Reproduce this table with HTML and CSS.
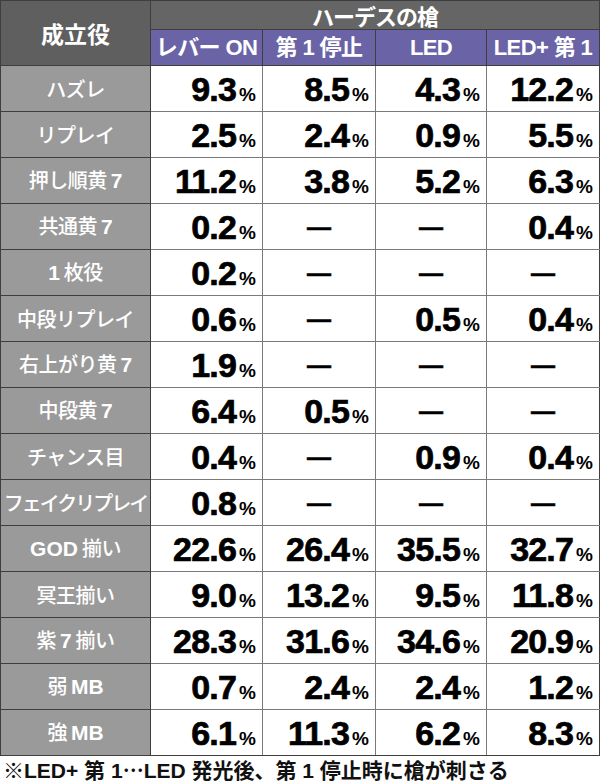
FILE: index.html
```html
<!DOCTYPE html>
<html lang="ja">
<head>
<meta charset="utf-8">
<link rel="stylesheet" href="styles.css">
</head>
<body>
<div class="page">
<table class="tbl">
<colgroup>
<col class="c-label"><col class="c1"><col class="c2"><col class="c3"><col class="c4">
</colgroup>
<thead>
<tr class="hr1"><th rowspan="2" class="corner">成立役</th><th colspan="4" class="group">ハーデスの槍</th></tr>
<tr class="hr2"><th class="sub">レバー ON</th><th class="sub">第 1 停止</th><th class="sub">LED</th><th class="sub">LED+ 第 1</th></tr>
</thead>
<tbody>
<tr><th class="label">ハズレ</th><td class="num">9.3<span class="pct">%</span></td><td class="num">8.5<span class="pct">%</span></td><td class="num">4.3<span class="pct">%</span></td><td class="num">12.2<span class="pct">%</span></td></tr>
<tr><th class="label">リプレイ</th><td class="num">2.5<span class="pct">%</span></td><td class="num">2.4<span class="pct">%</span></td><td class="num">0.9<span class="pct">%</span></td><td class="num">5.5<span class="pct">%</span></td></tr>
<tr><th class="label">押し順黄 <span class="lat">7</span></th><td class="num">11.2<span class="pct">%</span></td><td class="num">3.8<span class="pct">%</span></td><td class="num">5.2<span class="pct">%</span></td><td class="num">6.3<span class="pct">%</span></td></tr>
<tr><th class="label">共通黄 <span class="lat">7</span></th><td class="num">0.2<span class="pct">%</span></td><td class="dash">—</td><td class="dash">—</td><td class="num">0.4<span class="pct">%</span></td></tr>
<tr><th class="label"><span class="lat">1</span> 枚役</th><td class="num">0.2<span class="pct">%</span></td><td class="dash">—</td><td class="dash">—</td><td class="dash">—</td></tr>
<tr><th class="label">中段リプレイ</th><td class="num">0.6<span class="pct">%</span></td><td class="dash">—</td><td class="num">0.5<span class="pct">%</span></td><td class="num">0.4<span class="pct">%</span></td></tr>
<tr><th class="label">右上がり黄 <span class="lat">7</span></th><td class="num">1.9<span class="pct">%</span></td><td class="dash">—</td><td class="dash">—</td><td class="dash">—</td></tr>
<tr><th class="label">中段黄 <span class="lat">7</span></th><td class="num">6.4<span class="pct">%</span></td><td class="num">0.5<span class="pct">%</span></td><td class="dash">—</td><td class="dash">—</td></tr>
<tr><th class="label">チャンス目</th><td class="num">0.4<span class="pct">%</span></td><td class="dash">—</td><td class="num">0.9<span class="pct">%</span></td><td class="num">0.4<span class="pct">%</span></td></tr>
<tr><th class="label label-long">フェイクリプレイ</th><td class="num">0.8<span class="pct">%</span></td><td class="dash">—</td><td class="dash">—</td><td class="dash">—</td></tr>
<tr><th class="label"><span class="lat">GOD</span> 揃い</th><td class="num">22.6<span class="pct">%</span></td><td class="num">26.4<span class="pct">%</span></td><td class="num">35.5<span class="pct">%</span></td><td class="num">32.7<span class="pct">%</span></td></tr>
<tr><th class="label">冥王揃い</th><td class="num">9.0<span class="pct">%</span></td><td class="num">13.2<span class="pct">%</span></td><td class="num">9.5<span class="pct">%</span></td><td class="num">11.8<span class="pct">%</span></td></tr>
<tr><th class="label">紫 <span class="lat">7</span> 揃い</th><td class="num">28.3<span class="pct">%</span></td><td class="num">31.6<span class="pct">%</span></td><td class="num">34.6<span class="pct">%</span></td><td class="num">20.9<span class="pct">%</span></td></tr>
<tr><th class="label">弱 <span class="lat">MB</span></th><td class="num">0.7<span class="pct">%</span></td><td class="num">2.4<span class="pct">%</span></td><td class="num">2.4<span class="pct">%</span></td><td class="num">1.2<span class="pct">%</span></td></tr>
<tr><th class="label">強 <span class="lat">MB</span></th><td class="num">6.1<span class="pct">%</span></td><td class="num">11.3<span class="pct">%</span></td><td class="num">6.2<span class="pct">%</span></td><td class="num">8.3<span class="pct">%</span></td></tr>
</tbody>
</table>
<p class="note">※LED+ 第 1<span class="cjk">…</span>LED 発光後、第 1 停止時に槍が刺さる</p>
</div>
</body>
</html>
```

FILE: styles.css
```css
html, body {
  margin: 0;
  padding: 0;
  background: #ffffff;
}
.page {
  width: 600px;
  height: 783px;
  overflow: hidden;
  font-family: "Liberation Sans", "Noto Sans CJK JP", sans-serif;
}
.tbl {
  width: 599px;
  border-collapse: collapse;
  table-layout: fixed;
}
.c-label { width: 150px; }
.c1 { width: 112px; }
.c2 { width: 113px; }
.c3 { width: 111px; }
.c4 { width: 113px; }
.tbl th, .tbl td {
  padding: 0;
  border: 1px solid #3e3e3e;
}
.hr1 { height: 29px; }
.hr2 { height: 36px; }
.tbl tbody tr { height: 46px; }
.corner {
  background: #5f5f5f;
  color: #ffffff;
  font-family: "Noto Sans CJK JP", sans-serif;
  font-weight: 700;
  font-size: 23px;
  line-height: 1;
  padding-bottom: 4px;
}
.group {
  background: #656565;
  color: #ffffff;
  font-family: "Noto Sans CJK JP", sans-serif;
  font-weight: 700;
  font-size: 22px;
  line-height: 1;
  text-align: left;
  padding-left: 161px !important;
  letter-spacing: -1px;
}
.sub {
  background: #6a63a6;
  color: #ffffff;
  font-weight: 700;
  font-size: 22px;
  line-height: 1;
  white-space: nowrap;
  letter-spacing: -0.6px;
}
.label {
  background: #9a9a9a;
  color: #ffffff;
  font-family: "Noto Sans CJK JP", sans-serif;
  font-weight: 500;
  font-size: 20px;
  line-height: 1;
  white-space: nowrap;
  letter-spacing: -0.5px;
}
.label-long { letter-spacing: -2px; }
.lat {
  font-family: "Liberation Sans", sans-serif;
  font-weight: 700;
  font-size: 21px;
  letter-spacing: 0;
}
.num, .dash {
  background: #ffffff;
  color: #000000;
  border-color: #7a7a7a !important;
}
.tbl tbody tr:last-child td { border-bottom-color: #3e3e3e !important; }
.tbl tbody td:last-child { border-right-color: #3e3e3e !important; }
.num {
  text-align: right;
  padding-right: 6px !important;
  font-weight: 700;
  font-size: 34px;
  line-height: 1;
  letter-spacing: -0.8px;
  white-space: nowrap;
  -webkit-text-stroke: 0.7px #000;
}
.pct {
  font-size: 19px;
  font-weight: 700;
  letter-spacing: 0;
  margin-left: 3px;
  -webkit-text-stroke: 0;
}
.dash {
  text-align center;
  text-align: center;
  font-family: "Liberation Sans", sans-serif;
  font-weight: 700;
  font-size: 24px;
  line-height: 1;
  -webkit-text-stroke: 0.5px #000;
}
.note {
  margin: 1px 0 0 3px;
  font-family: "Liberation Sans", "Noto Sans CJK JP", sans-serif;
  font-weight: 700;
  font-size: 21px;
  line-height: 25px;
  color: #111111;
  white-space: nowrap;
}
.cjk {
  font-family: "Noto Sans CJK JP", sans-serif;
}
```
